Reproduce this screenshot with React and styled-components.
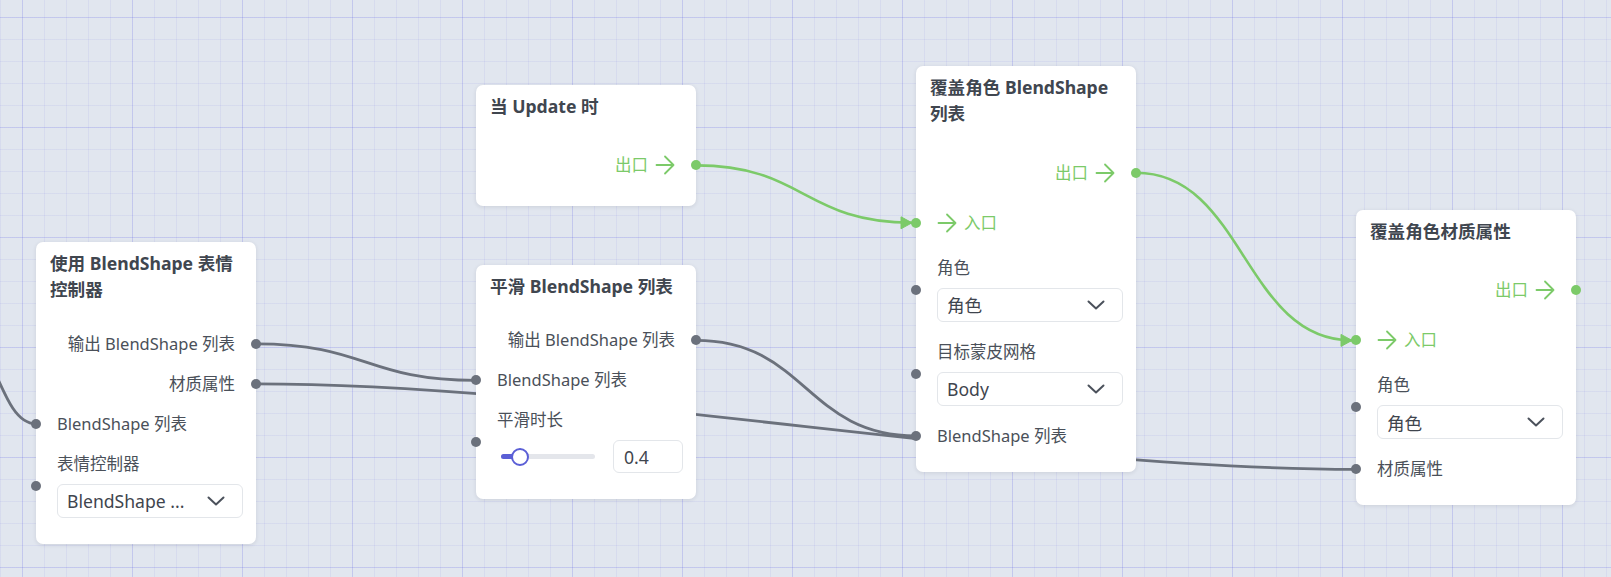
import React from 'react'
import styled, { createGlobalStyle } from 'styled-components'

const GREEN = '#7cca69'
const GREY = '#6b717c'
const TEXT = '#4a5059'
const INDIGO = '#5b5fd6'

const GlobalStyle = createGlobalStyle`
  html, body {
    margin: 0;
    padding: 0;
  }

  body {
    font-family: "Noto Sans", "Noto Sans CJK SC", sans-serif;
  }
`

const Canvas = styled.div`
  position: relative;
  width: 100vw;
  height: 577px;
  overflow: hidden;
  background-color: #e1e6ef;
  background-image: linear-gradient(to right, rgba(100, 104, 232, 0.17) 1.2px, transparent 1.2px),
    linear-gradient(to bottom, rgba(100, 104, 232, 0.17) 1.2px, transparent 1.2px),
    linear-gradient(to right, rgba(108, 112, 230, 0.09) 1px, transparent 1px),
    linear-gradient(to bottom, rgba(108, 112, 230, 0.09) 1px, transparent 1px);
  background-size: 110px 110px, 110px 110px, 22px 22px, 22px 22px;
  background-position: 22px 17px;
`

const Wires = styled.svg`
  position: absolute;
  left: 0;
  top: 0;
  width: 100%;
  height: 100%;
  overflow: visible;
`

const Card = styled.div`
  position: absolute;
  left: ${p => p.$x}px;
  top: ${p => p.$y}px;
  width: 220px;
  background: #fff;
  border-radius: 7px;
  box-shadow: 0 1px 4px rgba(15, 23, 42, 0.1);
`

const Title = styled.div`
  padding: 8px 10px 0 14px;
  font-size: 17.6px;
  font-weight: 700;
  line-height: 26.4px;
  color: #40464f;
`

const Body = styled.div`
  display: flex;
  flex-direction: column;
  padding: 21px 0 16px;
`

const Row = styled.div`
  position: relative;
  display: flex;
  align-items: center;
  justify-content: ${p => (p.$out ? 'flex-end' : 'flex-start')};
  gap: 7px;
  height: ${p => (p.$exec ? 50 : 40)}px;
  padding: 0 21px;
  font-size: 16.5px;
  line-height: 20px;
  color: ${p => (p.$exec ? GREEN : TEXT)};
`

const Field = styled.div`
  position: relative;
  display: flex;
  flex-direction: column;
  gap: 10px;
  padding: 10px 13px 10px 21px;
`

const FieldLabel = styled.div`
  font-size: 16.5px;
  line-height: 20px;
  color: ${TEXT};
`

const Handle = styled.span`
  position: absolute;
  top: 50%;
  ${p => (p.$right ? 'right' : 'left')}: -5px;
  width: 10px;
  height: 10px;
  margin-top: -5px;
  border-radius: 50%;
  background: ${p => (p.$exec ? GREEN : GREY)};
`

const Select = styled.div`
  display: flex;
  align-items: center;
  justify-content: space-between;
  box-sizing: border-box;
  height: 34px;
  padding: 0 17px 0 9px;
  border: 1px solid #e3e6ea;
  border-radius: 6px;
  font-size: 17.6px;
  color: #3f454e;
  white-space: nowrap;
`

const SliderRow = styled.div`
  display: flex;
  align-items: center;
  height: 33px;
`

const Track = styled.div`
  position: relative;
  width: 94px;
  height: 5px;
  margin-left: 4px;
  border-radius: 3px;
  background: #e4e6eb;
`

const Fill = styled.div`
  position: absolute;
  left: 0;
  top: 0;
  bottom: 0;
  border-radius: 3px 0 0 3px;
  background: ${INDIGO};
`

const Thumb = styled.div`
  position: absolute;
  top: 50%;
  width: 18px;
  height: 18px;
  margin: -9px 0 0 -9px;
  box-sizing: border-box;
  border: 2px solid ${INDIGO};
  border-radius: 50%;
  background: #fff;
`

const NumberBox = styled.div`
  display: flex;
  align-items: center;
  box-sizing: border-box;
  width: 70px;
  height: 33px;
  margin-left: auto;
  padding-left: 10px;
  border: 1px solid #e3e6ea;
  border-radius: 6px;
  font-size: 17.6px;
  color: #3f454e;
`

const Arrow = () => (
  <svg width="20" height="20" viewBox="0 0 20 20" fill="none" stroke={GREEN} strokeWidth="1.8" strokeLinecap="round" strokeLinejoin="round">
    <path d="M1.5 10h17M10 1.5l8.5 8.5-8.5 8.5" />
  </svg>
)

const Chevron = () => (
  <svg width="18" height="10" viewBox="0 0 18 10" fill="none" stroke="#4b515b" strokeWidth="2" strokeLinecap="round" strokeLinejoin="round">
    <path d="M1.5 1.5 9 8.5l7.5-7" />
  </svg>
)

const nodes = [
  {
    id: 'face',
    x: 36,
    y: 242,
    title: '使用 BlendShape 表情控制器',
    rows: [
      { kind: 'out', label: '输出 BlendShape 列表' },
      { kind: 'out', label: '材质属性' },
      { kind: 'in', label: 'BlendShape 列表' },
      { kind: 'select', label: '表情控制器', value: 'BlendShape ...' },
    ],
  },
  {
    id: 'update',
    x: 476,
    y: 85,
    title: '当 Update 时',
    rows: [{ kind: 'execOut' }],
  },
  {
    id: 'smooth',
    x: 476,
    y: 265,
    title: '平滑 BlendShape 列表',
    rows: [
      { kind: 'out', label: '输出 BlendShape 列表' },
      { kind: 'in', label: 'BlendShape 列表' },
      { kind: 'slider', label: '平滑时长', value: '0.4', fill: 19 },
    ],
  },
  {
    id: 'override',
    x: 916,
    y: 66,
    title: '覆盖角色 BlendShape 列表',
    rows: [
      { kind: 'execOut' },
      { kind: 'execIn' },
      { kind: 'select', label: '角色', value: '角色' },
      { kind: 'select', label: '目标蒙皮网格', value: 'Body' },
      { kind: 'in', label: 'BlendShape 列表' },
    ],
  },
  {
    id: 'material',
    x: 1356,
    y: 210,
    title: '覆盖角色材质属性',
    rows: [
      { kind: 'execOut' },
      { kind: 'execIn' },
      { kind: 'select', label: '角色', value: '角色' },
      { kind: 'in', label: '材质属性' },
    ],
  },
]

const bezier = (sx, sy, tx, ty, k = 0.5) => {
  const c = Math.abs(tx - sx) * k
  return `M${sx},${sy} C${sx + c},${sy} ${tx - c},${ty} ${tx},${ty}`
}

const edges = [
  { d: 'M-14,352 C4,392 14,423.8 36,423.8' },
  { d: bezier(256, 343.8, 476, 380.4) },
  { d: bezier(256, 383.8, 1356, 469.4, 0.3) },
  { d: bezier(696, 340.4, 916, 435.8) },
  { d: bezier(696, 165.4, 912, 222.8), exec: true },
  { d: bezier(1136, 172.8, 1352, 340.4), exec: true },
]

const NodeRow = ({ row }) => {
  switch (row.kind) {
    case 'execOut':
      return (
        <Row $out $exec>
          出口
          <Arrow />
          <Handle $right $exec />
        </Row>
      )
    case 'execIn':
      return (
        <Row $exec>
          <Handle $exec />
          <Arrow />
          入口
        </Row>
      )
    case 'out':
      return (
        <Row $out>
          {row.label}
          <Handle $right />
        </Row>
      )
    case 'in':
      return (
        <Row>
          <Handle />
          {row.label}
        </Row>
      )
    case 'select':
      return (
        <Field>
          <Handle />
          <FieldLabel>{row.label}</FieldLabel>
          <Select>
            <span>{row.value}</span>
            <Chevron />
          </Select>
        </Field>
      )
    case 'slider':
      return (
        <Field>
          <Handle />
          <FieldLabel>{row.label}</FieldLabel>
          <SliderRow>
            <Track>
              <Fill style={{ width: row.fill }} />
              <Thumb style={{ left: row.fill }} />
            </Track>
            <NumberBox>{row.value}</NumberBox>
          </SliderRow>
        </Field>
      )
    default:
      return null
  }
}

export default function App() {
  return (
    <>
      <GlobalStyle />
      <Canvas>
        <Wires>
          <defs>
            <marker id="exec-arrow" viewBox="-12 -7 14 14" markerWidth="14" markerHeight="14" markerUnits="userSpaceOnUse" orient="auto" refX="0" refY="0">
              <path d="M-11,-6 L0,0 L-11,6 Z" fill={GREEN} stroke={GREEN} strokeWidth="1" strokeLinejoin="round" />
            </marker>
          </defs>
          {edges.map((edge, i) => (
            <path
              key={i}
              d={edge.d}
              fill="none"
              stroke={edge.exec ? GREEN : GREY}
              strokeWidth={edge.exec ? 2.6 : 2.8}
              markerEnd={edge.exec ? 'url(#exec-arrow)' : undefined}
            />
          ))}
        </Wires>
        {nodes.map(node => (
          <Card key={node.id} $x={node.x} $y={node.y}>
            <Title>{node.title}</Title>
            <Body>
              {node.rows.map((row, i) => (
                <NodeRow key={i} row={row} />
              ))}
            </Body>
          </Card>
        ))}
      </Canvas>
    </>
  )
}
